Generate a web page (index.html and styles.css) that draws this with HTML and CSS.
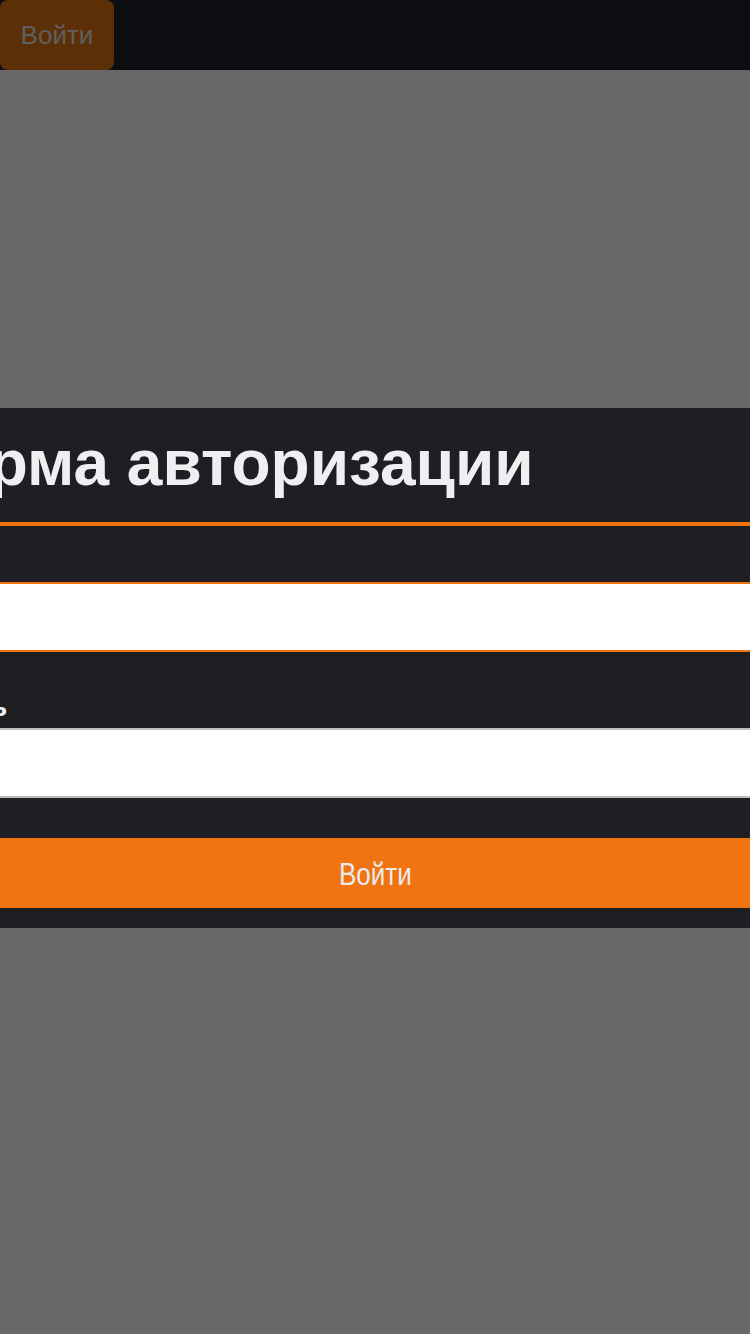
FILE: index.html
```html
<!DOCTYPE html>
<html lang="ru">
<head>
<meta charset="utf-8">
<title>Вход</title>
<link rel="stylesheet" href="styles.css">
</head>
<body>
<header class="topbar">
  <button class="topbar-login" type="button">Войти</button>
</header>
<div class="backdrop">
  <form class="modal">
    <h1 class="modal-title">Форма авторизации</h1>
    <div class="field">
      <label class="field-label" for="login">Логин</label>
      <input class="field-input is-focused" id="login" type="text">
    </div>
    <div class="field field-next">
      <label class="field-label" for="password">Пароль</label>
      <input class="field-input" id="password" type="password">
    </div>
    <button class="submit" type="button"><span class="submit-text">Войти</span></button>
  </form>
</div>
</body>
</html>
```
FILE: styles.css
```css
html, body {
  margin: 0;
  padding: 0;
}
body {
  background: #686868;
  font-family: "Liberation Sans", Arial, sans-serif;
  width: 750px;
  height: 1334px;
  overflow: hidden;
}
.topbar {
  height: 70px;
  background: #0d0e11;
  display: flex;
  align-items: stretch;
}
.topbar-login {
  height: 70px;
  width: 114px;
  padding: 0;
  border: none;
  border-radius: 8px;
  background: #5d2f07;
  color: #5f5f5f;
  font-family: "Liberation Sans", Arial, sans-serif;
  font-size: 26px;
}
.backdrop {
  position: fixed;
  inset: 0;
  overflow: hidden;
}
.modal {
  position: absolute;
  left: 50%;
  top: 50%;
  width: 944px;
  margin: 1px 0 0;
  transform: translate(-50%, -50%);
  background: #1f1e23;
  padding: 0 20px 20px;
  box-sizing: content-box;
  display: flex;
  flex-direction: column;
}
.modal-title {
  margin: 0 -20px;
  padding: 18px 12px 22px;
  font-size: 64px;
  line-height: 74px;
  font-weight: bold;
  color: #efeff1;
  white-space: nowrap;
  border-bottom: 4px solid #f07411;
}
.field {
  display: flex;
  flex-direction: column;
  padding-top: 19px;
}
.field-next {
  margin-top: 20px;
}
.field-label {
  font-size: 28px;
  line-height: 32px;
  font-weight: bold;
  color: #efeff1;
  margin-bottom: 5px;
}
.field-input {
  box-sizing: border-box;
  width: 100%;
  height: 70px;
  margin: 0;
  padding: 0 16px;
  background: #ffffff;
  border: 2px solid #bdbdbd;
  border-radius: 0;
  outline: none;
  font-size: 24px;
}
.field-input.is-focused {
  border-color: #f07411;
}
.submit {
  margin-top: 40px;
  height: 70px;
  width: 100%;
  border: none;
  padding: 4px 0 0;
  background: #f07411;
  color: #ebebed;
  font-family: "Liberation Sans", Arial, sans-serif;
  font-size: 31px;
}
.submit-text {
  display: inline-block;
  transform: scaleX(0.84);
}
```
